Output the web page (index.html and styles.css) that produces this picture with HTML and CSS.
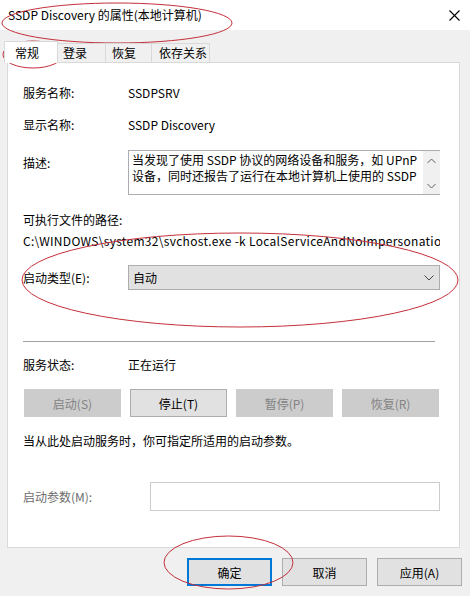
FILE: index.html
```html
<!DOCTYPE html>
<html lang="zh-CN">
<head>
    <meta charset="utf-8">
    <title>SSDP Discovery 的属性(本地计算机)</title>
    <link rel="stylesheet" href="styles.css">
</head>

<body>
    <div class="window">
        <div class="titlebar">
            <span class="title">SSDP Discovery 的属性(本地计算机)</span>
            <svg class="close" width="11" height="11" viewBox="0 0 11 11">
                <path d="M0.5 0.5 L10.5 10.5 M10.5 0.5 L0.5 10.5" stroke="#000" stroke-width="1.1" fill="none"/>
            </svg>
        </div>

        <div class="tabs">
            <div class="tab tab-active">常规</div>
            <div class="tab tab-login">登录</div>
            <div class="tab tab-recover">恢复</div>
            <div class="tab tab-deps">依存关系</div>
        </div>

        <div class="panel">
            <div class="row row-name">
                <span class="label">服务名称:</span>
                <span>SSDPSRV</span>
            </div>
            <div class="row row-display">
                <span class="label">显示名称:</span>
                <span>SSDP Discovery</span>
            </div>
            <div class="row row-desc">
                <span class="label desc-label">描述:</span>
                <div class="desc">
                    <div class="desc-text">当发现了使用 SSDP 协议的网络设备和服务，如 UPnP<br>设备，同时还报告了运行在本地计算机上使用的 SSDP</div>
                    <div class="scrollbar">
                        <svg width="9" height="6" viewBox="0 0 9 6"><path d="M0.5 5 L4.5 1 L8.5 5" stroke="#606060" fill="none"/></svg>
                        <svg width="9" height="6" viewBox="0 0 9 6"><path d="M0.5 1 L4.5 5 L8.5 1" stroke="#606060" fill="none"/></svg>
                    </div>
                </div>
            </div>

            <div class="path-label">可执行文件的路径:</div>
            <div class="path">C:\WINDOWS\system32\svchost.exe -k LocalServiceAndNoImpersonation</div>

            <div class="row row-type">
                <span class="label">启动类型(E):</span>
                <div class="select">
                    <span>自动</span>
                    <svg width="10" height="6" viewBox="0 0 10 6"><path d="M0.5 0.5 L5 5 L9.5 0.5" stroke="#444" fill="none"/></svg>
                </div>
            </div>

            <div class="sep"></div>

            <div class="row row-status">
                <span class="label">服务状态:</span>
                <span>正在运行</span>
            </div>

            <div class="ctrl-buttons">
                <div class="btn btn-off">启动(S)</div>
                <div class="btn">停止(T)</div>
                <div class="btn btn-off">暂停(P)</div>
                <div class="btn btn-off">恢复(R)</div>
            </div>

            <p class="hint">当从此处启动服务时，你可指定所适用的启动参数。</p>

            <div class="row row-param">
                <span class="label label-off">启动参数(M):</span>
                <div class="param-input"></div>
            </div>
        </div>

        <div class="footer">
            <div class="btn btn-ok">确定</div>
            <div class="btn">取消</div>
            <div class="btn">应用(A)</div>
        </div>

        <!-- 红色圈注 -->
        <svg class="marks" width="470" height="596" viewBox="0 0 470 596">
            <ellipse cx="117" cy="23" rx="115" ry="20"/>
            <ellipse cx="33" cy="54.5" rx="30" ry="13.5"/>
            <ellipse cx="240" cy="280" rx="218" ry="47"/>
            <ellipse cx="228.5" cy="562.5" rx="64.5" ry="26.5"/>
        </svg>
    </div>
</body>
</html>
```

FILE: styles.css
```css
*{margin:0; padding:0; box-sizing:border-box;}
body{
    background:#f0f0f0;
    font:12px "Noto Sans CJK SC", "Noto Sans", sans-serif;
    color:#000;
}
.window{
    position:relative;
    width:470px; height:596px;
    overflow:hidden;
}
.titlebar{
    height:30px;
    background:#fff;
    display:flex; align-items:center; justify-content:space-between;
    padding:0 10px 0 8px;
}
.title{font-size:12px; line-height:16px;}

/* 选项卡 */
.tabs{
    display:flex; align-items:flex-start;
    height:22px;
    margin-top:11px;
    margin-bottom:-1px;
    padding-left:4px;
    position:relative; z-index:1;
}
.tab{
    height:19px;
    margin-top:2px;
    line-height:18px;
    padding-left:5px;
    background:#f0f0f0;
    border:1px solid #d9d9d9;
    border-bottom:none;
    border-left:none;
}
.tab-active{
    height:22px;
    margin-top:0;
    line-height:21px;
    width:54px;
    padding-left:10px;
    background:#fff;
    border-left:1px solid #d9d9d9;
}
.tab-login{width:48px;}
.tab-recover{width:46px; padding-left:6px;}
.tab-deps{width:58px; padding-left:7px;}

/* 主面板 */
.panel{
    margin-left:7px;
    width:453px; height:486px;
    background:#fff;
    border:1px solid #d9d9d9;
    padding:20px 19px 0 15px;
}
.row{
    display:grid;
    grid-template-columns:105px 1fr;
    align-items:center;
    height:20px;
    line-height:16px;
}
.row-display{margin-top:12px;}
.row-desc{margin-top:15px; height:45px; align-items:start;}
.desc-label{padding-top:5px;}
.desc{
    display:flex;
    height:45px;
    border:1px solid #abadb3;
    border-right:none;
}
.desc-text{
    flex:1;
    white-space:nowrap; overflow:hidden;
    padding:1px 0 0 3px;
    line-height:16px;
}
.scrollbar{
    width:17px;
    background:#f0f0f0;
    display:flex; flex-direction:column; justify-content:space-between; align-items:center;
    padding:7px 0 5px;
}
.path-label{margin-top:15px; height:20px; line-height:20px;}
.path{
    margin-top:1px; height:20px; line-height:20px;
    white-space:nowrap; overflow:hidden;
    letter-spacing:0.3px;
}
.row-type{margin-top:14px; height:25px;}
.select{
    height:25px;
    background:#e1e1e1;
    border:1px solid #adadad;
    display:flex; align-items:center; justify-content:space-between;
    padding:0 5px 0 4px;
}
.sep{
    margin-top:51px;
    height:1px;
    margin-right:5px;
    background:#a0a0a0;
}
.row-status{margin-top:13px;}

.ctrl-buttons{
    margin:14px 1px 0 1px;
    display:grid;
    grid-template-columns:repeat(4, 1fr);
    column-gap:9px;
}
.btn{
    height:28px;
    background:#e1e1e1;
    border:1px solid #adadad;
    display:flex; align-items:center; justify-content:center;
}
.btn-off{
    background:#cccccc;
    border-color:#cccccc;
    color:#838383;
}
.hint{margin-top:14px; height:20px; line-height:20px;}
.row-param{
    margin-top:31px;
    height:29px;
    grid-template-columns:127px 1fr;
}
.label-off{color:#6d6d6d;}
.param-input{
    height:29px;
    border:1px solid #cccccc;
    background:#fff;
}

/* 底部按钮 */
.footer{
    display:flex; justify-content:flex-end;
    gap:10px;
    margin-top:10px;
    padding-right:8px;
}
.footer .btn{width:85px;}
.footer .btn-ok{border:2px solid #0078d7;}

.marks{
    position:absolute; top:0; left:0;
    pointer-events:none;
}
.marks ellipse{
    fill:none;
    stroke:#c4303a;
    stroke-width:1;
}
```
